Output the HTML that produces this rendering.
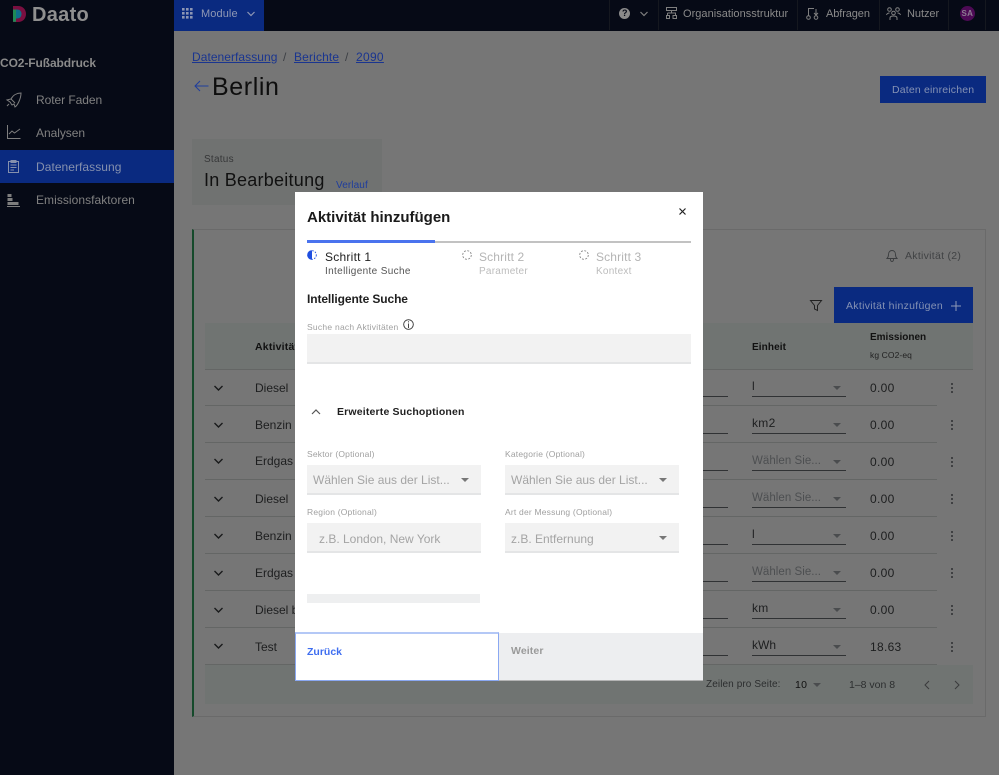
<!DOCTYPE html>
<html lang="de"><head><meta charset="utf-8"><title>Berlin</title>
<style>
html,body{margin:0;padding:0}
body{width:999px;height:775px;position:relative;overflow:hidden;background:#767676;font-family:"Liberation Sans",sans-serif;color:#111}
.a{position:absolute}
.t{position:absolute;white-space:nowrap;line-height:1}
.rl{position:absolute;left:205px;width:732px;height:1px;background:#646665}
.ul{position:absolute;height:1px;background:#303234}
.n{font-size:12px;color:#1d1e1f;letter-spacing:.3px}
.m{font-size:12px;color:#1d1e1f;letter-spacing:0}
.g{font-size:11.5px;color:#4d4f51;letter-spacing:.05px}
.tri{position:absolute;width:0;height:0;border-left:4px solid transparent;border-right:4px solid transparent;border-top:4px solid #4a4c4e}
.f{position:absolute;background:#f2f2f2;border-bottom:2px solid #e4e5e6;box-sizing:border-box}
.mt{position:absolute;width:0;height:0;border-left:4.5px solid transparent;border-right:4.5px solid transparent;border-top:4.5px solid #777}
.lb{font-size:8.5px;color:#a0a0a0;letter-spacing:.2px}
.ph{font-size:12px;color:#a4a4a4;letter-spacing:0}
svg{position:absolute;overflow:visible}
</style></head><body>

<!-- top bar -->
<div class="a" style="left:0;top:0;width:999px;height:31px;background:#060a16"></div>
<div class="a" style="left:174px;top:0;width:90px;height:31px;background:#0a2a80"></div>
<div class="a" style="left:0;top:31px;width:174px;height:744px;background:#060a16"></div>

<!-- logo -->
<svg style="left:13px;top:6px" width="13" height="16" viewBox="0 0 13 16">
<path d="M0 0H5C10 0 13 3.500 13 8S10 16 5 16H0Z" fill="#7a0f40"/>
<path d="M0 3.500H4C7 3.500 8.500 5.500 8.500 8S7 12.500 4 12.500H0Z" fill="#0f6f8a"/>
<path d="M0 3.500H3V15.800H0Z" fill="#1f8a55"/>
</svg>
<div class="t" style="left:32px;top:5px;font-size:20px;font-weight:700;color:#8f8f8f;letter-spacing:.3px">Daato</div>

<!-- Module -->
<svg style="left:182px;top:8px" width="11" height="11" viewBox="0 0 11 11" fill="#8c96b4"><rect width="2.600" height="2.600"/><rect x="4" width="2.600" height="2.600"/><rect x="8" width="2.600" height="2.600"/><rect y="4" width="2.600" height="2.600"/><rect x="4" y="4" width="2.600" height="2.600"/><rect x="8" y="4" width="2.600" height="2.600"/><rect y="8" width="2.600" height="2.600"/><rect x="4" y="8" width="2.600" height="2.600"/><rect x="8" y="8" width="2.600" height="2.600"/></svg>
<div class="t" style="left:201px;top:9px;font-size:11px;color:#8f98b4;letter-spacing:.1px">Module</div>
<svg style="left:247px;top:11px" width="8" height="6" viewBox="0 0 8 6" fill="none" stroke="#8f98b4" stroke-width="1.200"><path d="M.5 1 4 4.500 7.500 1"/></svg>

<!-- header right -->
<div class="a" style="left:609px;top:0;width:1px;height:30px;background:#15181f"></div>
<div class="a" style="left:658px;top:0;width:1px;height:30px;background:#15181f"></div>
<div class="a" style="left:797px;top:0;width:1px;height:30px;background:#15181f"></div>
<div class="a" style="left:879px;top:0;width:1px;height:30px;background:#15181f"></div>
<div class="a" style="left:948px;top:0;width:1px;height:30px;background:#15181f"></div>
<div class="a" style="left:985px;top:0;width:1px;height:30px;background:#15181f"></div>
<div class="a" style="left:619px;top:8px;width:11px;height:11px;border-radius:50%;background:#8a8a8a"></div>
<div class="t" style="left:622px;top:9px;font-size:9px;font-weight:700;color:#060a16">?</div>
<svg style="left:640px;top:11px" width="8" height="6" viewBox="0 0 8 6" fill="none" stroke="#808080" stroke-width="1.200"><path d="M.5 1 4 4.500 7.500 1"/></svg>
<svg style="left:666px;top:7px" width="11" height="12" viewBox="0 0 11 12" fill="none" stroke="#808080"><rect x=".5" y=".5" width="10" height="3"/><path d="M5.500 3.500V6M1.500 6H9.500V8M1.500 6V8"/><rect x=".5" y="8.500" width="3" height="3"/><rect x="7" y="8.500" width="3.500" height="3"/></svg>
<div class="t" style="left:683px;top:9px;font-size:11px;color:#8a8a8a;letter-spacing:.03px">Organisationsstruktur</div>
<svg style="left:806px;top:7px" width="13" height="13" viewBox="0 0 13 13" fill="none" stroke="#808080"><circle cx="2.500" cy="10.500" r="1.800"/><circle cx="10" cy="10.500" r="1.800"/><path d="M2.500 8.500V1.500H8M10 2V8M8 6l2 2 2-2"/></svg>
<div class="t" style="left:826px;top:9px;font-size:11px;color:#8a8a8a;letter-spacing:-.1px">Abfragen</div>
<svg style="left:886px;top:7px" width="15" height="13" viewBox="0 0 15 13" fill="none" stroke="#808080"><circle cx="3.500" cy="2.500" r="1.800"/><circle cx="11.500" cy="2.500" r="1.800"/><circle cx="7.500" cy="6" r="1.800"/><path d="M.5 8C1 6.500 2 6 3.500 6M14.500 8C14 6.500 13 6 11.500 6M4 13V11C4 9.500 5.500 9 7.500 9S11 9.500 11 11V13"/></svg>
<div class="t" style="left:907px;top:9px;font-size:11px;color:#8a8a8a;letter-spacing:-.05px">Nutzer</div>
<div class="a" style="left:960px;top:6px;width:15px;height:15px;border-radius:50%;background:#4d0a55"></div>
<div class="t" style="left:961.500px;top:9.500px;font-size:8px;font-weight:700;color:#8d7d92;letter-spacing:.3px">SA</div>

<!-- sidebar -->
<div class="t" style="left:0;top:57px;font-size:12px;font-weight:700;color:#8a8a8a;letter-spacing:-.1px">CO2-Fußabdruck</div>
<div class="a" style="left:0;top:150px;width:174px;height:33px;background:#0a2a80"></div>
<svg style="left:6px;top:92px" width="16" height="16" viewBox="0 0 16 16" fill="none" stroke="#7e7e7e" stroke-width="1"><path d="M15 1C11 1 7 3 5 7L1 8 4 10 6 13 8 12 9 15C12 13 15 6 15 1ZM5 7l4 4M3 12 1 14"/></svg>
<div class="t" style="left:36px;top:94px;font-size:12px;color:#808080;letter-spacing:-.05px">Roter Faden</div>
<svg style="left:7px;top:125px" width="14" height="14" viewBox="0 0 14 14" fill="none" stroke="#7e7e7e" stroke-width="1"><path d="M.5 0V13.500H13.500M2 9 5 6 7.500 8 13 4"/></svg>
<div class="t" style="left:36px;top:127px;font-size:12px;color:#808080;letter-spacing:-.05px">Analysen</div>
<svg style="left:8px;top:160px" width="11" height="13" viewBox="0 0 11 13" fill="none" stroke="#8590ad" stroke-width="1"><rect x=".5" y="1.500" width="10" height="11"/><rect x="3" y=".5" width="5" height="2" fill="#8590ad"/><path d="M2.500 5H8.500M2.500 7.500H8.500M2.500 10H6"/></svg>
<div class="t" style="left:36px;top:161px;font-size:12px;color:#8590ad;letter-spacing:.05px">Datenerfassung</div>
<svg style="left:7px;top:193px" width="13" height="14" viewBox="0 0 13 14" fill="#7e7e7e"><rect x=".5" y="1" width="4" height="3"/><rect x=".5" y="5" width="5" height="3"/><rect x=".5" y="9" width="11" height="3"/><rect x="0" y="13" width="13" height="1"/></svg>
<div class="t" style="left:36px;top:194px;font-size:12px;color:#808080;letter-spacing:.05px">Emissionsfaktoren</div>

<!-- breadcrumb -->
<div class="t" style="left:192px;top:51px;font-size:12px;color:#1a3590;letter-spacing:.05px"><span style="text-decoration:underline">Datenerfassung</span></div>
<div class="t" style="left:283px;top:51px;font-size:12px;color:#3c3f44">/</div>
<div class="t" style="left:294px;top:51px;font-size:12px;color:#1a3590;letter-spacing:.15px"><span style="text-decoration:underline">Berichte</span></div>
<div class="t" style="left:345px;top:51px;font-size:12px;color:#3c3f44">/</div>
<div class="t" style="left:356px;top:51px;font-size:12px;color:#1a3590;letter-spacing:.3px"><span style="text-decoration:underline">2090</span></div>
<svg style="left:194px;top:80px" width="15" height="12" viewBox="0 0 15 12" fill="none" stroke="#1f3d9c" stroke-width="1"><path d="M14.500 6H1M6 1 1 6 6 11"/></svg>
<div class="t" style="left:212px;top:75px;font-size:25px;color:#0e0e0e;letter-spacing:.6px">Berlin</div>
<div class="a" style="left:880px;top:76px;width:106px;height:27px;background:#0a2a80"></div>
<div class="t" style="left:892px;top:85px;font-size:10.500px;color:#8592b4;letter-spacing:.18px">Daten einreichen</div>

<!-- status -->
<div class="a" style="left:192px;top:139px;width:190px;height:66px;background:#707271"></div>
<div class="t" style="left:204px;top:155px;font-size:10px;color:#363738;letter-spacing:.25px">Status</div>
<div class="t" style="left:204px;top:171px;font-size:18px;color:#111;letter-spacing:.25px">In Bearbeitung</div>
<div class="t" style="left:336px;top:181px;font-size:10px;color:#1f3d9c;letter-spacing:.1px">Verlauf</div>

<!-- card -->
<div class="a" style="left:192px;top:229px;width:794px;height:488px;box-sizing:border-box;border:1px solid #6a6a6a;border-left:2px solid #154a2b"></div>
<svg style="left:886px;top:249px" width="12" height="13" viewBox="0 0 12 13" fill="none" stroke="#3b3d3f" stroke-width=".9"><path d="M1 9.500C2 8.500 2.500 7.500 2.500 5.500 2.500 3 4 1.500 6 1.500S9.500 3 9.500 5.500C9.500 7.500 10 8.500 11 9.500ZM4.500 10C4.500 11.500 5 12.500 6 12.500S7.500 11.500 7.500 10"/></svg>
<div class="t" style="left:905px;top:251px;font-size:10.500px;color:#404244;letter-spacing:.28px">Aktivität (2)</div>
<svg style="left:810px;top:300px" width="12" height="11" viewBox="0 0 12 11" fill="none" stroke="#222" stroke-width="1"><path d="M.5.500H11.500L7.500 5.500V10.500L4.500 9V5.500Z"/></svg>
<div class="a" style="left:834px;top:287px;width:139px;height:36px;background:#0a2a80"></div>
<div class="t" style="left:846px;top:301px;font-size:10.500px;color:#8592b4;letter-spacing:.3px">Aktivität hinzufügen</div>
<svg style="left:951px;top:300.500px" width="10" height="10" viewBox="0 0 10 10" stroke="#8f9ab8" stroke-width="1"><path d="M5 0V10M0 5H10"/></svg>

<!-- table -->
<div class="a" style="left:205px;top:323px;width:768px;height:46px;background:#707472"></div>
<div class="a" style="left:205px;top:369px;width:768px;height:1px;background:#646665"></div>
<div class="t" style="left:255px;top:342px;font-size:10.500px;font-weight:700;color:#111;letter-spacing:.2px">Aktivität</div>
<div class="t" style="left:752px;top:343px;font-size:10px;font-weight:700;color:#111;letter-spacing:.1px">Einheit</div>
<div class="t" style="left:870px;top:333px;font-size:10px;font-weight:700;color:#111;letter-spacing:0">Emissionen</div>
<div class="t" style="left:870px;top:351px;font-size:8.500px;color:#222;letter-spacing:.1px">kg CO2-eq</div>

<div class="rl" style="top:405px"></div><div class="rl" style="top:442px"></div><div class="rl" style="top:479px"></div><div class="rl" style="top:516px"></div><div class="rl" style="top:553px"></div><div class="rl" style="top:590px"></div><div class="rl" style="top:627px"></div><div class="rl" style="top:664px"></div>

<svg style="left:214px;top:385px" width="9" height="270" viewBox="0 0 9 270" fill="none" stroke="#191a1b" stroke-width="1.400"><path d="M.5 1 4.500 5 8.500 1M.5 38 4.500 42 8.500 38M.5 74 4.500 78 8.500 74M.5 112 4.500 116 8.500 112M.5 149 4.500 153 8.500 149M.5 186 4.500 190 8.500 186M.5 223 4.500 227 8.500 223M.5 259 4.500 263 8.500 259"/></svg>

<div class="t m" style="left:255px;top:382px">Diesel</div>
<div class="t m" style="left:255px;top:419px">Benzin</div>
<div class="t m" style="left:255px;top:455px">Erdgas</div>
<div class="t m" style="left:255px;top:493px">Diesel</div>
<div class="t m" style="left:255px;top:530px">Benzin</div>
<div class="t m" style="left:255px;top:567px">Erdgas</div>
<div class="t m" style="left:255px;top:604px">Diesel b</div>
<div class="t m" style="left:255px;top:641px">Test</div>

<!-- amount underlines -->
<div class="ul" style="left:703px;top:396px;width:25px"></div><div class="ul" style="left:703px;top:433px;width:25px"></div><div class="ul" style="left:703px;top:470px;width:25px"></div><div class="ul" style="left:703px;top:507px;width:25px"></div><div class="ul" style="left:703px;top:544px;width:25px"></div><div class="ul" style="left:703px;top:581px;width:25px"></div><div class="ul" style="left:703px;top:618px;width:25px"></div><div class="ul" style="left:703px;top:655px;width:25px"></div>

<!-- unit selects -->
<div class="ul" style="left:752px;top:396px;width:94px"></div><div class="ul" style="left:752px;top:433px;width:94px"></div><div class="ul" style="left:752px;top:507px;width:94px"></div><div class="ul" style="left:752px;top:470px;width:94px"></div><div class="ul" style="left:752px;top:544px;width:94px"></div><div class="ul" style="left:752px;top:581px;width:94px"></div><div class="ul" style="left:752px;top:618px;width:94px"></div><div class="ul" style="left:752px;top:655px;width:94px"></div>
<div class="t n" style="left:752px;top:380px">l</div>
<div class="t n" style="left:752px;top:417px">km2</div>
<div class="t g" style="left:752px;top:456px">Wählen Sie...</div>
<div class="t g" style="left:752px;top:493px">Wählen Sie...</div>
<div class="t n" style="left:752px;top:528px">l</div>
<div class="t g" style="left:752px;top:567px">Wählen Sie...</div>
<div class="t n" style="left:752px;top:602px">km</div>
<div class="t m" style="left:752px;top:639px">kWh</div>
<div class="tri" style="left:833px;top:386px"></div><div class="tri" style="left:833px;top:423px"></div><div class="tri" style="left:833px;top:460px"></div><div class="tri" style="left:833px;top:497px"></div><div class="tri" style="left:833px;top:534px"></div><div class="tri" style="left:833px;top:571px"></div><div class="tri" style="left:833px;top:608px"></div><div class="tri" style="left:833px;top:645px"></div>

<div class="t n" style="left:870px;top:382px">0.00</div>
<div class="t n" style="left:870px;top:419px">0.00</div>
<div class="t n" style="left:870px;top:456px">0.00</div>
<div class="t n" style="left:870px;top:493px">0.00</div>
<div class="t n" style="left:870px;top:530px">0.00</div>
<div class="t n" style="left:870px;top:567px">0.00</div>
<div class="t n" style="left:870px;top:604px">0.00</div>
<div class="t n" style="left:870px;top:641px">18.63</div>

<svg style="left:951px;top:383px" width="2" height="270" viewBox="0 0 2 270" fill="#3f4042"><path d="M0 0h2v2H0zM0 4h2v2H0zM0 8h2v2H0zM0 37h2v2H0zM0 41h2v2H0zM0 45h2v2H0zM0 74h2v2H0zM0 78h2v2H0zM0 82h2v2H0zM0 111h2v2H0zM0 115h2v2H0zM0 119h2v2H0zM0 148h2v2H0zM0 152h2v2H0zM0 156h2v2H0zM0 185h2v2H0zM0 189h2v2H0zM0 193h2v2H0zM0 222h2v2H0zM0 226h2v2H0zM0 230h2v2H0zM0 259h2v2H0zM0 263h2v2H0zM0 267h2v2H0z"/></svg>

<!-- footer -->
<div class="a" style="left:205px;top:665px;width:768px;height:39px;background:#707472"></div>
<div class="t" style="left:706px;top:679.500px;font-size:10px;color:#2c2e2f;letter-spacing:.1px">Zeilen pro Seite:</div>
<div class="t" style="left:795px;top:680px;font-size:10.500px;color:#111;letter-spacing:.3px">10</div>
<div class="tri" style="left:813px;top:683px"></div>
<div class="t" style="left:849px;top:679.500px;font-size:10.500px;color:#2c2e2f;letter-spacing:0">1–8 von 8</div>
<svg style="left:924px;top:680px" width="6" height="10" viewBox="0 0 6 10" fill="none" stroke="#3a3b3c" stroke-width="1"><path d="M5 1 1 5 5 9"/></svg>
<svg style="left:954px;top:680px" width="6" height="10" viewBox="0 0 6 10" fill="none" stroke="#3a3b3c" stroke-width="1"><path d="M1 1 5 5 1 9"/></svg>

<!-- modal -->
<div class="a" style="left:295px;top:192px;width:408px;height:488px;background:#fff"></div>
<div class="t" style="left:307px;top:210px;font-size:15px;font-weight:700;color:#1a1a1a;letter-spacing:0">Aktivität hinzufügen</div>
<svg style="left:679px;top:208px" width="7" height="7" viewBox="0 0 7 7" stroke="#222" stroke-width="1.200"><path d="M.5.500 6.500 6.500M6.500.500 .5 6.500"/></svg>
<div class="a" style="left:307px;top:240px;width:128px;height:3px;background:#4a73ee"></div>
<div class="a" style="left:435px;top:241px;width:256px;height:2px;background:#c2c2c2"></div>

<svg style="left:307px;top:250px" width="10" height="10" viewBox="0 0 10 10"><path d="M5 .2A4.800 4.800 0 0 0 5 9.800Z" fill="#1f4fe0"/><circle cx="5" cy="5" r="4.300" fill="none" stroke="#1f4fe0" stroke-width=".9" stroke-dasharray="1.600 1.300"/></svg>
<div class="t" style="left:325px;top:251px;font-size:12px;color:#222;letter-spacing:.25px">Schritt 1</div>
<div class="t" style="left:325px;top:267px;font-size:10px;color:#555;letter-spacing:.35px">Intelligente Suche</div>
<svg style="left:462px;top:250px" width="10" height="10" viewBox="0 0 10 10"><circle cx="5" cy="5" r="4.300" fill="none" stroke="#888" stroke-width=".9" stroke-dasharray="2 1.400"/></svg>
<div class="t" style="left:479px;top:251px;font-size:12px;color:#b4b4b4;letter-spacing:.15px">Schritt 2</div>
<div class="t" style="left:479px;top:267px;font-size:10px;color:#bcbcbc;letter-spacing:.25px">Parameter</div>
<svg style="left:579px;top:250px" width="10" height="10" viewBox="0 0 10 10"><circle cx="5" cy="5" r="4.300" fill="none" stroke="#888" stroke-width=".9" stroke-dasharray="2 1.400"/></svg>
<div class="t" style="left:596px;top:251px;font-size:12px;color:#b4b4b4;letter-spacing:.15px">Schritt 3</div>
<div class="t" style="left:596px;top:267px;font-size:10px;color:#bcbcbc;letter-spacing:.25px">Kontext</div>

<div class="t" style="left:307px;top:293px;font-size:12px;font-weight:700;color:#1f1f1f;letter-spacing:-.1px">Intelligente Suche</div>
<div class="t lb" style="left:307px;top:323px;letter-spacing:.25px">Suche nach Aktivitäten</div>
<svg style="left:403px;top:319px" width="11" height="11" viewBox="0 0 11 11" fill="none" stroke="#333" stroke-width=".9"><circle cx="5.500" cy="5.500" r="4.800"/><path d="M5.500 4.500V9M5.500 2.200V3.400"/></svg>
<div class="f" style="left:307px;top:334px;width:384px;height:30px"></div>

<svg style="left:311px;top:408px" width="10" height="7" viewBox="0 0 10 7" fill="none" stroke="#555" stroke-width="1.200"><path d="M1 6 5 2 9 6"/></svg>
<div class="t" style="left:337px;top:407px;font-size:10.500px;font-weight:700;color:#1f1f1f;letter-spacing:.17px">Erweiterte Suchoptionen</div>

<div class="t lb" style="left:307px;top:450px">Sektor (Optional)</div>
<div class="t lb" style="left:505px;top:450px">Kategorie (Optional)</div>
<div class="f" style="left:307px;top:465px;width:174px;height:30px"></div>
<div class="f" style="left:505px;top:465px;width:174px;height:30px"></div>
<div class="t ph" style="left:313px;top:474px">Wählen Sie aus der List...</div>
<div class="t ph" style="left:511px;top:474px">Wählen Sie aus der List...</div>
<div class="mt" style="left:461px;top:478px"></div>
<div class="mt" style="left:659px;top:478px"></div>

<div class="t lb" style="left:307px;top:508px">Region (Optional)</div>
<div class="t lb" style="left:505px;top:508px">Art der Messung (Optional)</div>
<div class="f" style="left:307px;top:523px;width:174px;height:30px"></div>
<div class="f" style="left:505px;top:523px;width:174px;height:30px"></div>
<div class="t ph" style="left:319px;top:533px">z.B. London, New York</div>
<div class="t ph" style="left:511px;top:533px">z.B. Entfernung</div>
<div class="mt" style="left:659px;top:536px"></div>

<div class="a" style="left:307px;top:594px;width:173px;height:9px;background:#eeeff0"></div>

<div class="a" style="left:295px;top:632px;width:204px;height:49px;box-sizing:border-box;background:#fff;border:1px solid #8aa8f2;border-top:2px solid #b4c8f6"></div>
<div class="a" style="left:499px;top:633px;width:204px;height:47px;background:#edeef0"></div>
<div class="a" style="left:499px;top:680px;width:204px;height:1px;background:#b4b4b4"></div>
<div class="t" style="left:307px;top:647px;font-size:10.500px;font-weight:700;color:#3f6ef0;letter-spacing:0">Zurück</div>
<div class="t" style="left:511px;top:646px;font-size:10.500px;font-weight:700;color:#9a9a9a;letter-spacing:.1px">Weiter</div>

</body></html>
